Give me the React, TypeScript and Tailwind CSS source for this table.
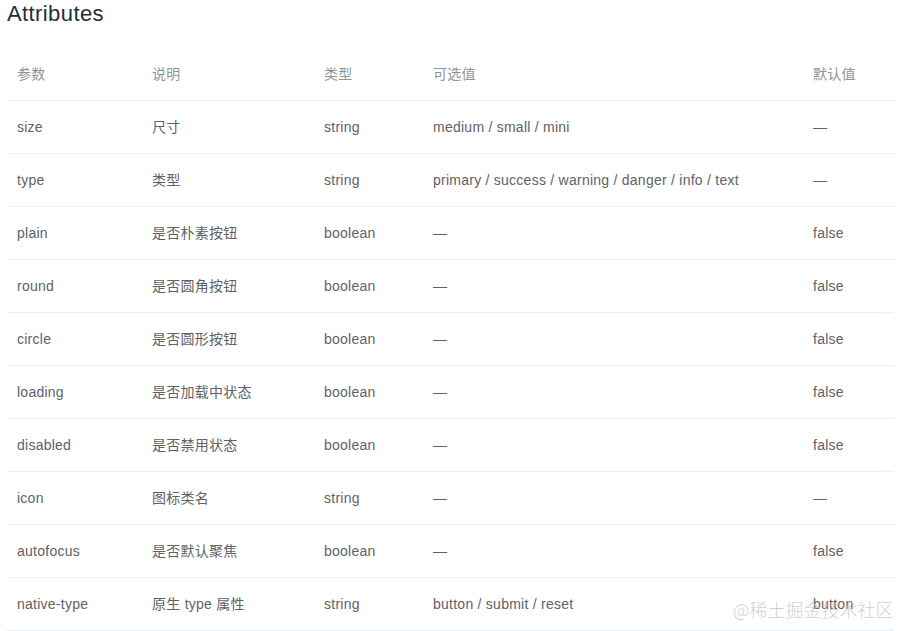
import React from "react";

const rows: [string, string, string, string, string][] = [
  ["size", "尺寸", "string", "medium / small / mini", "—"],
  ["type", "类型", "string", "primary / success / warning / danger / info / text", "—"],
  ["plain", "是否朴素按钮", "boolean", "—", "false"],
  ["round", "是否圆角按钮", "boolean", "—", "false"],
  ["circle", "是否圆形按钮", "boolean", "—", "false"],
  ["loading", "是否加载中状态", "boolean", "—", "false"],
  ["disabled", "是否禁用状态", "boolean", "—", "false"],
  ["icon", "图标类名", "string", "—", "—"],
  ["autofocus", "是否默认聚焦", "boolean", "—", "false"],
  ["native-type", "原生 type 属性", "string", "button / submit / reset", "button"],
];

const cols = ["w-[135px]", "w-[172px]", "w-[109px]", "w-[380px]", "w-[91px]"];
const headers = ["参数", "说明", "类型", "可选值", "默认值"];

export default function App() {
  return (
    <div
      className="relative w-[899px] h-[631px] bg-white overflow-hidden"
      style={{ fontFamily: '"Liberation Sans", "Noto Sans CJK SC", sans-serif' }}
    >
      <h3 className="pl-[7px] pt-[1px] h-[48px] text-[22px] leading-[26px] tracking-[0.4px] text-[#1f2f3d]">Attributes</h3>
      <div className="ml-[7px] w-[887px] text-[14px] tracking-[0.25px]">
        <div className="flex h-[53px] items-center border-b border-[#ebeef5] text-[#909399]">
          {headers.map((h, i) => (
            <div key={i} className={`${cols[i]} pl-[10px]`}>
              {h}
            </div>
          ))}
        </div>
        {rows.map((r, ri) => (
          <div key={ri} className="flex h-[53px] items-center border-b border-[#ebeef5] text-[#606266]">
            {r.map((c, i) => (
              <div key={i} className={`${cols[i]} pl-[10px] whitespace-nowrap`}>
                {c}
              </div>
            ))}
          </div>
        ))}
      </div>
      <div
        className="absolute left-[733px] top-[597px] text-[18px] leading-[24px] text-[#c4c4c4]/80 whitespace-nowrap font-light"
        style={{ fontFamily: '"Noto Sans CJK SC", sans-serif' }}
      >
        @稀土掘金技术社区
      </div>
    </div>
  );
}
